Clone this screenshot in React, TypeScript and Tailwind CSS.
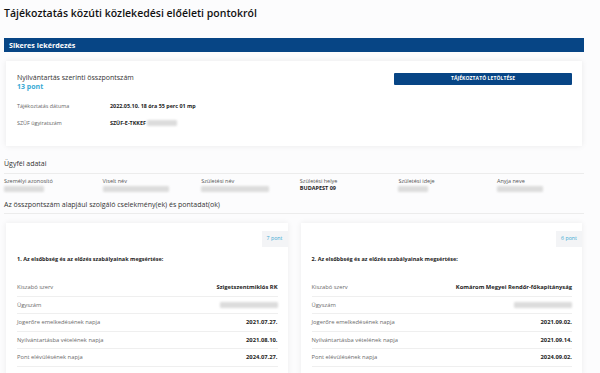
import React from "react";

type Row = { label: string; value?: string; blurred?: boolean };

interface Offense {
  title: string;
  points: string;
  rows: Row[];
}

const offenses: Offense[] = [
  {
    title: "1. Az elsőbbség és az előzés szabályainak megsértése:",
    points: "7 pont",
    rows: [
      { label: "Kiszabó szerv", value: "Szigetszentmiklós RK" },
      { label: "Ügyszám", blurred: true },
      { label: "Jogerőre emelkedésének napja", value: "2021.07.27." },
      { label: "Nyilvántartásba vételének napja", value: "2021.08.10." },
      { label: "Pont elévülésének napja", value: "2024.07.27." },
    ],
  },
  {
    title: "2. Az elsőbbség és az előzés szabályainak megsértése:",
    points: "6 pont",
    rows: [
      { label: "Kiszabó szerv", value: "Komárom Megyei Rendőr-főkapitányság" },
      { label: "Ügyszám", blurred: true },
      { label: "Jogerőre emelkedésének napja", value: "2021.09.02." },
      { label: "Nyilvántartásba vételének napja", value: "2021.09.14." },
      { label: "Pont elévülésének napja", value: "2024.09.02." },
    ],
  },
];

const clientFields = [
  { label: "Személyi azonosító", w: "w-[40px]" },
  { label: "Viselt név", w: "w-[66px]" },
  { label: "Születési név", w: "w-[68px]" },
  { label: "Születési helye", value: "BUDAPEST 09" },
  { label: "Születési ideje", w: "w-[30px]" },
  { label: "Anyja neve", w: "w-[46px]" },
];

function Blur({ className }: { className: string }) {
  return <div className={`h-[6px] bg-[#dcdcdc] blur-[0.8px] rounded-[1px] ${className}`} />;
}

function OffenseCard({ offense }: { offense: Offense }) {
  return (
    <div className="bg-white shadow-[0_0_6px_rgba(0,0,0,0.07)] pl-[11px] pr-[10px] pb-[8px]">
      <div className="flex justify-end -mr-[10px]">
        <div className="bg-[#f3f4f6] px-[5px] h-[16px] flex items-center text-[5.3px] text-[#3aaad4] mt-[8px]">
          {offense.points}
        </div>
      </div>
      <div className="font-bold text-[5.5px] text-[#1d1d1d] mt-[8px] mb-[16px]">{offense.title}</div>
      {offense.rows.map((r) => (
        <div
          key={r.label}
          className="flex items-center justify-between h-[17.5px] border-b border-[#efefef] text-[5.8px]"
        >
          <span className="text-[#6b6b6b]">{r.label}</span>
          {r.blurred ? (
            <Blur className="w-[58px]" />
          ) : (
            <span className="font-bold text-[#1d1d1d]">{r.value}</span>
          )}
        </div>
      ))}
    </div>
  );
}

export default function App() {
  return (
    <div
      className="w-[600px] h-[373px] overflow-hidden bg-[#fcfcfd] text-[#222]"
      style={{ fontFamily: '"Open Sans", "Liberation Sans", sans-serif' }}
    >
      <div className="w-[580px] ml-[4px]">
        <h1 className="text-[10.5px] font-semibold leading-[20px] pt-[3px] text-[#111]">
          Tájékoztatás közúti közlekedési előéleti pontokról
        </h1>

        <div className="mt-[15px] h-[14px] bg-[#074585] flex items-center pl-[5px]">
          <span className="text-white font-bold text-[7.2px]">Sikeres lekérdezés</span>
        </div>

        <div className="mt-[9px] mx-[2px] h-[85px] bg-white shadow-[0_0_6px_rgba(0,0,0,0.08)] pl-[11px] pr-[11px] pt-[12px] flex">
          <div className="flex-1">
            <div className="text-[7px] leading-[9px] text-[#333]">Nyilvántartás szerinti összpontszám</div>
            <div className="text-[7px] leading-[10px] font-bold text-[#3aaad4]">13 pont</div>
            <div className="flex items-center mt-[10px] text-[5.4px] leading-[8px]">
              <span className="w-[93px] text-[#666]">Tájékoztatás dátuma</span>
              <span className="font-bold text-[#1d1d1d]">2022.05.10. 18 óra 55 perc 01 mp</span>
            </div>
            <div className="flex items-center mt-[9px] text-[5.4px] leading-[8px]">
              <span className="w-[93px] text-[#666]">SZÜF ügyiratszám</span>
              <span className="font-bold text-[#1d1d1d]">SZÜF-E-TKKEF</span>
              <Blur className="w-[30px] ml-[1px]" />
            </div>
          </div>
          <div className="w-[178px] mr-[-1px]">
            <div className="h-[12px] bg-[#074585] rounded-[1px] flex items-center justify-center text-white font-bold text-[5px] tracking-[0.1px]">
              TÁJÉKOZTATÓ LETÖLTÉSE
            </div>
          </div>
        </div>

        <div className="mt-[13px] text-[7px] leading-[10px] text-[#333]">Ügyfél adatai</div>
        <div className="mt-[4px] border-t border-[#ececec]" />
        <div className="grid grid-cols-[repeat(6,98.6px)] mt-[4px]">
          {clientFields.map((f) => (
            <div key={f.label} className="flex flex-col">
              <span className="text-[5.5px] leading-[7px] text-[#555]">{f.label}</span>
              {f.value ? (
                <span className="text-[5.5px] leading-[7px] font-bold text-[#1d1d1d]">{f.value}</span>
              ) : (
                <Blur className={`${f.w} mt-[1px]`} />
              )}
            </div>
          ))}
        </div>
        <div className="mt-[8px] text-[7px] leading-[10px] text-[#333]">
          Az összpontszám alapjául szolgáló cselekmény(ek) és pontadat(ok)
        </div>
        <div className="mt-[3px] border-t border-[#ececec]" />

        <div className="grid grid-cols-2 gap-[13px] mt-[9px] mx-[2px]">
          {offenses.map((o) => (
            <OffenseCard key={o.title} offense={o} />
          ))}
        </div>
      </div>
    </div>
  );
}
